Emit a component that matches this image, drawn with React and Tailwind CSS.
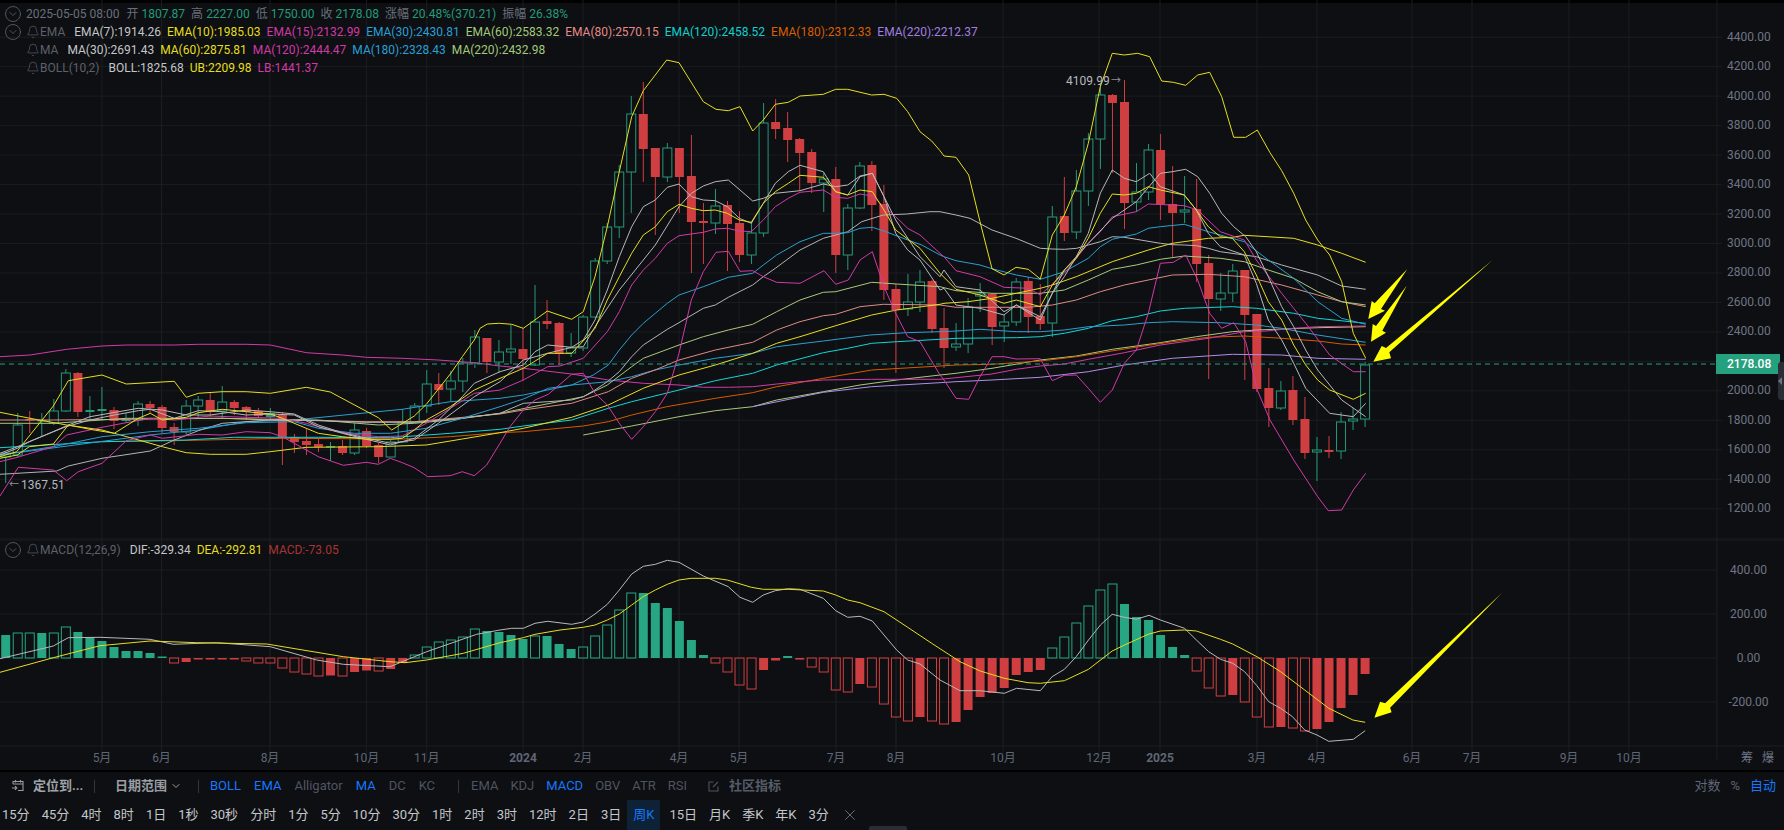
import { Bell, CircleChevronDown, ChevronDown, X } from 'lucide-react'

// reference crops were read in three frames, these map them back to page pixels
const f8 = (u, v) => [u / 3, 340 + v / 3]
const f9 = (u, v) => [480 + u / 3, 60 + v / 3]
const f10 = (u, v) => [920 + u / 3, 30 + v / 3]
const m7 = (u, v) => [u / 3, 530 + v / 3]
const m11 = (u, v) => [480 + u / 3, 540 + v / 3]
const m12 = (u, v) => [940 + u / 2.613, 540 + v / 3]

const build = (...parts) => {
  const out = []
  parts.forEach(([fn, arr]) => {
    for (let i = 0; i < arr.length; i += 2) {
      const p = fn(arr[i], arr[i + 1])
      if (!out.length || p[0] > out[out.length - 1][0]) out.push(p)
    }
  })
  return out.map(p => p[0].toFixed(1) + ',' + p[1].toFixed(1)).join(' ')
}

const LINES = [
  // MA220
  ['#a9c97a', build([f9, [310,1125,455,1098,597,1070,706,1052,818,1040,890,1020,1030,995,1140,975,1250,960,1380,945]], [f10, [108,1030,216,1015,361,990,469,978,577,958,721,938,829,920,937,905,1009,900,1193,893,1337,890]])],
  // EMA220
  ['#b08ee8', build([f9, [818,1040,1030,997,1175,980,1380,968]], [f10, [108,1055,216,1050,361,1042,505,1025,613,1005,757,985,937,973,1085,975,1193,985,1337,988]])],
  // EMA180
  ['#d65a00', build([f8, [306,305,523,302,847,295,1207,297,1351,290,1500,278]], [f9, [130,1115,310,1098,385,1085,455,1065,560,1040,706,1015,818,998,890,980,1030,955,1175,930,1380,918]], [f10, [108,1005,216,1003,361,993,469,980,613,957,757,935,865,922,973,918,1085,925,1193,933,1265,942,1337,945]])],
  // MA120
  ['#d13aa8', build([f8, [0,50,90,45,200,28,306,18,379,15,523,15,595,13,739,13,811,15,919,38,1027,45,1099,52,1207,55,1315,60,1423,68,1500,78]], [f9, [130,925,275,942,385,960,490,970,597,975,670,982,745,982,818,980,890,972,960,965,1030,960,1175,958,1380,958]], [f10, [108,1043,216,1032,289,1018,361,1008,433,1002,505,988,613,968,721,945,865,925,973,905,1037,903,1121,895,1193,890,1337,888]])],
  // EMA120
  ['#12d6d6', build([f8, [0,323,306,305,559,300,703,292,955,292,1171,293,1351,280,1500,268]], [f9, [130,1098,275,1080,385,1045,455,1025,597,990,706,962,818,940,890,915,1030,878,1103,865,1175,850,1250,845,1380,838]], [f10, [108,925,289,923,361,920,433,910,505,895,577,872,649,860,721,843,793,835,937,830,1009,835,1121,850,1193,865,1337,880]])],
  // MA180
  ['#2b9fd0', build([f8, [0,345,450,285,595,270,739,245,883,240,1063,222,1207,208,1351,185,1500,175]], [f9, [130,1005,275,975,385,965,455,950,525,930,597,915,706,895,818,880,890,860,1030,843,1170,825,1280,818,1380,815]], [f10, [108,903,180,898,289,905,361,905,433,900,505,890,613,885,685,878,757,875,901,878,1009,885,1085,895,1193,915,1337,937]])],
  // EMA80
  ['#e08a85', build([f8, [0,240,160,240,379,238,667,235,811,238,1099,245,1243,245,1500,222]], [f9, [130,1050,275,1030,385,995,455,955,525,930,597,900,706,870,818,847,890,810,960,785,1030,767,1067,763,1140,740,1210,733,1380,735]], [f10, [108,832,216,832,325,832,397,825,469,810,541,785,613,765,685,750,757,735,865,733,973,740,1085,765,1193,795,1265,815,1337,830]])],
  // EMA60
  ['#a9c97a', build([f8, [0,250,160,250,379,235,667,235,811,240,955,240,1135,255,1243,250,1351,240,1500,220]], [f9, [310,1010,382,975,455,920,490,895,597,855,670,830,745,810,818,793,890,755,960,720,1030,697,1067,695,1175,667,1250,672,1380,680]], [f10, [108,782,216,790,289,790,361,790,433,780,505,750,577,718,649,705,721,688,793,678,901,685,973,695,1045,720,1121,745,1193,785,1265,815,1337,825]])],
  // MA60
  ['#e8dd20', build([f8, [0,217,90,235,200,255,306,270,380,290,487,320,559,338,631,343,739,343,811,335,919,322,1135,320,1279,315,1387,297,1500,278]], [f9, [130,1105,275,1072,385,1035,490,985,597,945,706,915,818,880,890,850,960,830,1067,797,1175,765,1250,750,1380,733]], [f10, [72,820,144,815,216,805,289,790,361,775,397,765,469,740,577,695,685,660,757,640,865,625,937,622,973,616,1121,625,1193,645,1265,670,1337,697]])],
  // MA30
  ['#b4b4b4', build([f8, [0,403,170,393,205,378,306,355,451,333,523,300,595,272,667,250,811,240,955,242,1099,247,1243,247,1387,235,1500,220]], [f9, [130,1030,203,1025,275,1020,310,1010,345,990,382,965,418,935,455,890,490,855,562,808,597,788,670,745,706,735,745,712,818,675,850,650,886,625,960,570,1030,535,1067,525,1103,515,1145,485,1210,465,1280,462,1350,455,1380,455]], [f10, [108,555,150,565,216,600,288,625,361,655,397,657,433,658,470,655,505,645,541,635,577,620,613,622,649,628,721,640,757,644,793,645,829,647,865,655,901,665,973,675,1009,680,1085,705,1193,735,1265,768,1337,778]])],
  // EMA30
  ['#2b9fd0', build([f8, [0,345,160,320,306,290,451,275,595,265,739,248,883,245,955,265,1063,280,1171,280,1279,265,1387,235,1500,200]], [f9, [130,1017,205,985,275,975,340,945,385,915,418,870,455,825,490,790,526,760,562,730,597,705,670,680,745,652,818,640,850,615,890,585,960,545,1030,520,1067,520,1103,518,1140,505,1177,502,1212,513,1283,540,1325,555,1380,585]], [f10, [72,680,108,692,180,705,216,716,289,735,361,748,433,725,505,685,541,650,577,628,649,612,685,595,721,590,793,583,865,605,973,635,1045,690,1121,745,1193,815,1265,865,1337,883]])],
  // LB
  ['#d13aa8', build([f8, [0,468,55,382,160,390,200,422,235,395,306,370,379,302,451,285,487,295,595,283,667,285,739,275,811,278,847,290,919,330,955,350,1030,376,1099,367,1135,373,1171,355,1207,368,1243,383,1283,410,1351,407,1387,395,1423,407,1460,375,1500,310]], [f9, [90,1100,130,1050,165,1020,205,1003,275,943,310,940,345,1000,382,1035,418,1090,455,1138,490,1100,526,1055,562,1000,597,880,634,720,670,635,708,577,745,574,780,634,818,632,850,650,890,667,960,670,1032,632,1067,673,1105,660,1140,600,1177,575,1212,680,1247,760,1283,830,1320,845,1380,945]], [f10, [72,1050,108,1105,146,1108,180,1040,216,980,252,980,288,987,361,986,397,1052,433,1036,469,1035,505,1075,541,1117,577,1080,613,1000,649,960,685,850,721,700,760,697,797,675,833,750,869,850,905,895,941,878,977,935,1012,1080,1050,1170,1121,1290,1193,1400,1225,1442,1265,1440,1300,1380,1337,1330]])],
  // UB
  ['#e8dd20', build([f8, [0,350,50,335,160,198,205,122,306,105,379,132,523,124,559,172,595,160,667,155,739,155,811,160,919,142,991,156,1135,233,1175,270,1243,228,1279,193,1351,102,1387,50,1423,0]], [f9, [0,805,22,792,58,790,95,793,130,805,202,753,275,778,310,755,345,650,382,500,418,335,455,170,490,92,560,0,597,8,670,125,708,148,745,152,780,140,818,213,850,180,886,133,925,127,960,108,1030,103,1067,88,1103,88,1175,105,1212,103,1250,115,1283,155,1320,215,1355,243,1380,272]], [f10, [72,378,108,382,146,435,180,575,216,716,252,735,288,712,325,718,361,747,397,615,433,555,469,470,505,340,541,170,577,70,613,75,653,70,689,80,725,153,760,157,797,166,833,135,869,127,905,200,941,322,977,322,1012,300,1050,368,1085,422,1121,490,1157,570,1193,630,1229,675,1265,755,1300,910,1337,985]])],
  // EMA15
  ['#d13aa8', build([f8, [0,365,52,352,160,320,200,285,306,262,379,248,451,235,523,240,631,228,739,232,847,235,919,250,991,270,1063,283,1135,290,1207,288,1279,250,1351,205,1423,160,1500,150]], [f9, [130,960,203,920,240,918,310,895,382,815,418,755,455,675,490,630,526,595,562,550,597,527,670,517,706,507,742,505,778,513,814,515,850,480,886,440,925,415,960,397,1030,390,1067,412,1103,415,1140,402,1177,408,1212,440,1247,470,1283,505,1320,525,1380,580]], [f10, [72,680,108,722,180,740,252,772,325,775,361,795,433,730,505,640,541,605,577,560,649,545,685,522,757,525,793,527,833,540,901,605,973,630,1009,690,1085,790,1157,880,1229,975,1300,1025,1337,1025]])],
  // BOLL
  ['#b8b8b8', build([f8, [0,340,52,320,160,275,205,255,270,230,415,205,487,210,559,225,631,225,739,210,811,215,883,222,955,255,1027,278,1171,310,1243,300,1315,250,1423,170,1500,125]], [f9, [130,900,203,880,275,862,310,860,345,800,418,690,490,600,526,555,597,440,634,400,670,378,706,365,745,360,780,390,818,423,850,415,886,400,960,392,1030,372,1067,380,1103,375,1140,348,1177,340,1212,410,1247,480,1320,590,1380,650]], [f10, [72,720,108,770,180,780,252,845,289,825,361,860,433,720,505,640,577,565,649,515,721,430,757,425,797,418,833,440,869,490,905,550,941,590,977,620,1009,665,1045,740,1085,830,1121,890,1157,960,1193,1020,1265,1110,1337,1160]])],
  // EMA7
  ['#b8b8b8', build([f8, [0,345,52,325,88,305,160,275,198,260,270,240,343,225,415,212,451,208,523,235,595,212,667,215,739,225,811,222,883,225,955,260,1027,280,1099,298,1171,315,1243,295,1315,240,1387,170,1423,130,1500,95]], [f9, [130,915,165,875,203,855,275,862,310,840,345,780,382,690,418,590,455,500,490,440,526,420,562,382,597,372,634,410,670,420,706,422,742,440,778,475,814,490,850,430,886,370,925,335,960,316,1030,335,1067,395,1103,405,1140,350,1177,340,1212,410,1247,520,1283,570,1320,600,1380,690]], [f10, [72,775,108,825,180,835,216,845,252,855,289,825,361,870,397,790,433,740,469,680,505,610,541,490,577,420,613,445,649,455,689,430,721,470,793,495,829,540,865,610,901,650,973,675,1009,760,1045,870,1085,930,1121,1000,1157,1075,1229,1150,1300,1160,1337,1120]])],
  // EMA10
  ['#e8dd20', build([f8, [0,355,52,345,88,320,160,312,205,255,270,268,343,280,415,235,451,220,487,240,559,232,595,218,667,208,739,215,811,222,847,235,919,265,955,280,1027,290,1099,298,1171,298,1207,295,1243,270,1279,240,1351,200,1423,150,1500,115]], [f9, [130,925,203,880,275,880,345,805,382,720,418,650,455,580,490,525,526,500,562,455,597,433,634,445,670,452,706,450,742,460,778,480,814,487,850,430,886,395,925,370,960,346,1030,352,1067,395,1103,405,1140,390,1177,395,1212,450,1247,510,1320,565,1380,640]], [f10, [108,778,180,795,252,820,289,810,361,830,397,765,433,720,469,685,505,625,541,550,577,492,613,495,649,490,685,470,721,480,793,495,829,540,865,590,901,620,937,625,973,665,1009,735,1045,815,1085,870,1121,945,1157,1005,1193,1050,1229,1080,1300,1108,1337,1090]])],
]

// [bodyTop, bodyBottom, wickTop, wickBottom, kind] r = red, g = green filled thin, h = hollow green
const CANDLES = [
  [453,457,452,483,'h'],[425,455,413,457,'h'],[419,420,411,433,'r'],[420,421,413,437,'g'],[411,423,399,425,'h'],[373,411,369,412,'h'],[373,412,372,417,'r'],[410,412,396,420,'g'],[409,411,387,420,'g'],[410,421,407,429,'r'],
  [419,421,413,423,'g'],[404,420,401,426,'h'],[404,408,401,414,'r'],[407,428,405,433,'r'],[427,432,423,445,'r'],[406,432,400,436,'h'],[400,406,396,417,'h'],[400,412,393,417,'r'],[402,411,386,418,'h'],[402,408,400,415,'r'],
  [407,412,406,420,'r'],[411,416,408,418,'r'],[413,417,408,420,'g'],[415,437,412,465,'r'],[437,442,434,453,'r'],[441,445,428,455,'r'],[444,447,438,452,'r'],[446,447,442,461,'g'],[446,453,440,455,'r'],[430,453,423,455,'h'],
  [431,446,428,448,'r'],[445,457,443,463,'r'],[442,457,440,457,'h'],[422,442,409,443,'h'],[406,422,403,423,'h'],[384,406,370,413,'h'],[384,390,373,405,'r'],[381,389,371,401,'h'],[363,381,358,392,'h'],[337,363,330,368,'h'],
  [338,362,338,373,'r'],[352,362,340,373,'h'],[349,352,325,364,'h'],[349,359,328,381,'r'],[322,365,285,366,'h'],[321,324,300,329,'r'],[323,354,322,365,'r'],[348,353,333,357,'h'],[317,348,315,351,'h'],[261,317,258,318,'h'],
  [227,261,223,264,'h'],[172,227,165,238,'h'],[114,172,96,213,'h'],[114,149,82,182,'r'],[148,177,148,235,'r'],[148,177,143,182,'h'],[148,177,148,213,'r'],[176,222,135,273,'r'],[221,223,203,264,'r'],[206,223,189,234,'h'],
  [205,224,201,271,'r'],[223,255,211,262,'r'],[233,255,222,264,'h'],[123,233,103,237,'h'],[122,129,99,139,'r'],[128,140,112,162,'r'],[139,153,138,190,'r'],[152,183,149,193,'r'],[179,183,173,212,'h'],[179,255,167,273,'r'],
  [208,255,204,270,'h'],[166,208,162,209,'h'],[165,205,161,231,'r'],[204,290,185,300,'r'],[289,310,284,373,'r'],[302,309,274,316,'h'],[282,302,270,312,'h'],[281,329,280,333,'r'],[328,348,308,368,'r'],[344,347,323,351,'h'],
  [307,344,298,353,'h'],[294,296,283,312,'h'],[294,327,293,345,'r'],[322,326,315,342,'h'],[282,322,278,326,'h'],[281,317,277,333,'r'],[316,324,284,330,'r'],[217,323,206,337,'h'],[216,233,177,241,'r'],[191,232,170,239,'h'],
  [139,191,133,206,'h'],[95,139,83,169,'h'],[95,103,94,173,'r'],[102,203,80,229,'r'],[192,202,163,212,'h'],[150,192,144,200,'h'],[150,204,134,220,'r'],[204,213,166,257,'r'],[210,212,176,223,'h'],[209,264,179,282,'r'],
  [263,299,255,379,'r'],[293,299,273,311,'h'],[271,293,264,302,'h'],[270,315,270,380,'r'],[314,389,314,392,'r'],[388,408,368,427,'r'],[391,408,381,410,'h'],[390,420,376,425,'r'],[419,453,397,459,'r'],[450,452,437,481,'h'],
  [450,452,436,458,'r'],[422,451,412,459,'h'],[419,421,408,430,'h'],[365,419,362,427,'h'],
]

// [height above zero, hollow]
const BARS = [
  [23,0],[25,1],[25,1],[25,0],[25,1],[31,1],[26,0],[21,0],[17,0],[11,0],[7,0],[7,0],[5,0],[1.5,0],[-5,1],[-4,0],[-1.5,0],[-1.5,0],[-1.5,0],[-1.5,0],
  [-3,1],[-5,1],[-5,1],[-10,1],[-14,1],[-16,1],[-18,1],[-17.5,0],[-18,1],[-14,0],[-12.5,0],[-13,1],[-11,0],[-5,0],[3,1],[11,1],[16,1],[18,1],[21,1],[29,1],
  [27,0],[26,0],[23,0],[19,0],[22,1],[22,0],[14,0],[9,0],[11,1],[22,1],[33,1],[48,1],[65,1],[65,0],[55,0],[50,0],[37,0],[18,0],[3,0],[-5,1],
  [-14,1],[-27,1],[-31,1],[-12,0],[-2.5,0],[2,0],[-1.6,0],[-9,1],[-14,1],[-32,1],[-34,1],[-26,0],[-29,1],[-46,1],[-59,1],[-63,1],[-59,0],[-63,1],[-66,1],[-64,0],
  [-52,0],[-39,0],[-35,0],[-30,0],[-17,0],[-14,0],[-12,0],[10,1],[21,1],[35,1],[52,1],[68,1],[74,1],[54,0],[41,0],[38,0],[23,0],[11,0],[3,0],[-13,1],
  [-30,1],[-38,1],[-37,0],[-44,1],[-59,1],[-69,1],[-69,0],[-70,1],[-73,1],[-71,0],[-64,0],[-50,0],[-37,0],[-16,0],
]

const DIF = build([m7, [0,386,160,348,205,323,300,322,450,328,520,343,650,338,811,350,950,390,1030,403,1170,410,1280,365,1430,313,1500,300]], [m11, [95,265,130,265,165,250,203,244,275,253,310,246,345,222,382,193,418,150,455,102,490,79,526,73,562,61,597,67,670,108,745,140,780,172,818,187,850,165,886,152,925,146,960,148,1030,175,1067,212,1103,232,1140,229,1177,243,1212,285,1250,330,1283,360,1320,372,1380,420,1440,452]], [m12, [42,452,105,452,168,460,200,445,262,452,293,410,325,388,356,350,388,300,419,255,450,223,482,232,513,238,546,226,576,240,639,265,670,300,702,335,733,358,765,370,796,395,828,437,859,485,890,505,921,530,953,570,985,585,1016,604,1080,598,1111,572]])
const DEA = build([m7, [0,427,55,412,160,383,300,347,450,333,590,338,800,342,1030,380,1170,395,1215,398,1280,390,1390,370,1500,338]], [m11, [60,305,130,293,165,283,240,270,310,262,345,255,382,240,418,222,455,195,490,170,526,150,562,133,597,120,634,115,706,115,742,120,814,142,850,148,925,148,1030,153,1067,165,1103,180,1140,188,1212,215,1283,262,1355,310,1440,365]], [m12, [42,360,105,393,168,415,230,428,262,430,325,422,388,388,450,333,482,315,544,283,576,273,639,270,670,273,733,298,765,312,828,350,890,395,953,450,1016,505,1079,540,1111,547]])

const ARROWS = [
  [[322,87],[243,207],[255,212],[205,237],[215,183],[224,190]],
  [[320,137],[247,272],[258,278],[213,305],[218,252],[228,258]],
  [[578,60],[268,337],[273,355],[220,365],[245,318],[258,324]],
].map(a => a.map(p => (1300 + p[0] / 3).toFixed(1) + ',' + (240 + p[1] / 3).toFixed(1)).join(' '))
const MACD_ARROW = [[1470,157],[1176,503],[1180,517],[1135,533],[1150,485],[1163,490]].map(p => m12(p[0], p[1]).map(n => n.toFixed(1)).join(',')).join(' ')

const MONTHS = [
  ['5月',102],['6月',161.5],['8月',270],['10月',366.6],['11月',426.7],['2024',523,1],['2月',583],['4月',679],['5月',739],['7月',836],['8月',896],
  ['10月',1003],['12月',1099],['2025',1160,1],['3月',1257],['4月',1317],['6月',1412],['7月',1472],['9月',1569],['10月',1629],
]
const PRICES = ['4400.00','4200.00','4000.00','3800.00','3600.00','3400.00','3200.00','3000.00','2800.00','2600.00','2400.00','','2000.00','1800.00','1600.00','1400.00','1200.00']
const GRID_Y = PRICES.map((_, i) => 37.2 + i * 29.47)
const candleX = i => 5.7 + i * 12.03

const EMA_ROW = [
  ['EMA(7):1914.26','text-[#c4c6c9]'],['EMA(10):1985.03','text-[#e6dd1e]'],['EMA(15):2132.99','text-[#cf3aa6]'],['EMA(30):2430.81','text-[#2a9fd6]'],
  ['EMA(60):2583.32','text-[#a3c97b]'],['EMA(80):2570.15','text-[#e58a8a]'],['EMA(120):2458.52','text-[#10d0d0]'],['EMA(180):2312.33','text-[#d95f02]'],['EMA(220):2212.37','text-[#a37fe0]'],
]
const MA_ROW = [
  ['MA(30):2691.43','text-[#c4c6c9]'],['MA(60):2875.81','text-[#e6dd1e]'],['MA(120):2444.47','text-[#cf3aa6]'],['MA(180):2328.43','text-[#2a9fd6]'],['MA(220):2432.98','text-[#a3c97b]'],
]
const BOLL_ROW = [['BOLL:1825.68','text-[#c4c6c9]'],['UB:2209.98','text-[#e6dd1e]'],['LB:1441.37','text-[#cf3aa6]']]
const MACD_ROW = [['DIF:-329.34','text-[#c4c6c9]'],['DEA:-292.81','text-[#e6dd1e]'],['MACD:-73.05','text-[#a93436]']]
const OHLC = [['开','1807.87'],['高','2227.00'],['低','1750.00'],['收','2178.08'],['涨幅','20.48%(370.21)'],['振幅','26.38%']]

const PERIODS = ['15分','45分','4时','8时','1日','1秒','30秒','分时','1分','5分','10分','30分','1时','2时','3时','12时','2日','3日','周K','15日','月K','季K','年K','3分']
const MAIN_IND = [['BOLL',1],['EMA',1],['Alligator',0],['MA',1],['DC',0],['KC',0]]
const SUB_IND = [['EMA',0],['KDJ',0],['MACD',1],['OBV',0],['ATR',0],['RSI',0]]

function Grid({ rows }) {
  return (
    <>
      {rows.map(y => (
        <line key={y} x1="0" x2="1722" y1={y} y2={y} stroke="#1b1d21" strokeWidth="1" />
      ))}
      {MONTHS.map(([, x]) => (
        <line key={x} x1={x} x2={x} y1="0" y2="760" stroke="#1b1d21" strokeWidth="1" />
      ))}
      <line x1="1717" x2="1717" y1="0" y2="760" stroke="#1b1d21" strokeWidth="1" />
    </>
  )
}

function Candle({ c, i }) {
  const [top, bottom, wickTop, wickBottom, kind] = c
  const x = candleX(i)
  const red = kind === 'r'
  const color = red ? '#cf3f41' : '#26997a'
  return (
    <g>
      <line x1={x} x2={x} y1={wickTop} y2={wickBottom} stroke={color} strokeWidth="1" />
      <rect
        x={x - 4.5}
        y={top}
        width="9"
        height={Math.max(bottom - top, 1.5)}
        fill={kind === 'h' ? '#0d0f12' : color}
        stroke={kind === 'h' ? color : 'none'}
        strokeWidth="1"
      />
    </g>
  )
}

function Legend({ title, items }) {
  return (
    <div className="flex items-center h-[18px]">
      <Bell size={14} strokeWidth={1.2} className="text-[#5c616c]" />
      <span className="text-[#5c616c] mr-[9px]">{title}</span>
      <div className="flex gap-[6px]">
        {items.map(([t, c]) => (
          <span key={t} className={c}>{t}</span>
        ))}
      </div>
    </div>
  )
}

export default function App() {
  return (
    <div className="w-[1784px] h-[830px] overflow-hidden bg-[#0d0f12] text-[12px] font-['Roboto','Noto_Sans_CJK_SC',sans-serif] relative">
      <div className="h-[3px] bg-black" />

      {/* K线主图 */}
      <div className="flex h-[535px] relative">
        <div className="relative w-[1717px] h-full">
          <svg width="1717" height="535" viewBox="0 3 1717 535" className="block overflow-visible">
            <Grid rows={GRID_Y} />
            {CANDLES.map((c, i) => (
              <Candle key={i} c={c} i={i} />
            ))}
            {LINES.map(([color, pts], i) => (
              <polyline key={i} points={pts} fill="none" stroke={color} strokeWidth="1" strokeLinejoin="round" />
            ))}
            <line x1="0" x2="1717" y1="364" y2="364" stroke="#26a17f" strokeWidth="1" strokeDasharray="5 4" />
            <line x1="1716" x2="1722" y1="364" y2="364" stroke="#ffffff" strokeWidth="1" />
            {ARROWS.map(pts => (
              <polygon key={pts} points={pts} fill="#ffff00" />
            ))}
          </svg>

          <div className="absolute left-[4px] top-[2px] leading-none">
            <div className="flex items-center h-[18px]">
              <CircleChevronDown size={18} strokeWidth={1.1} className="text-[#5c616c] mr-[4px]" />
              <span className="text-[#6a6f7b] mr-[7px]">2025-05-05 08:00</span>
              <div className="flex gap-[6px]">
                {OHLC.map(([k, v]) => (
                  <span key={k} className="flex gap-[3px]">
                    <span className="text-[#6a6f7b]">{k}</span>
                    <span className="text-[#239c79]">{v}</span>
                  </span>
                ))}
              </div>
            </div>
            <div className="flex items-center">
              <CircleChevronDown size={18} strokeWidth={1.1} className="text-[#5c616c] mr-[4px]" />
              <Legend title="EMA" items={EMA_ROW} />
            </div>
            <div className="pl-[22px]">
              <Legend title="MA" items={MA_ROW} />
              <Legend title="BOLL(10,2)" items={BOLL_ROW} />
            </div>
          </div>

          <span className="absolute left-[1066px] top-[69px] text-[#b5b8be]">4109.99</span>
          <span className="absolute left-[1111px] top-[70px] text-[10px] text-[#8b8f97]">→</span>
          <span className="absolute left-[9px] top-[474px] text-[10px] text-[#8b8f97]">←</span>
          <span className="absolute left-[21px] top-[473px] text-[#b5b8be]">1367.51</span>
        </div>

        <div className="flex-1 flex flex-col pt-[19px] text-[#6f7585]">
          {PRICES.map((p, i) => (
            <div key={i} className="h-[29.47px] flex items-center pl-[10px]">{p}</div>
          ))}
        </div>

        <div className="absolute left-[1716px] top-[351px] w-[64px] h-[20px] bg-[#26a17f] text-white font-medium flex items-center pl-[11px]">
          2178.08
        </div>
        <div className="absolute right-0 top-[359px] w-[6px] h-[38px] bg-[#2a2d33] rounded-l-[3px] flex items-center">
          <div className="w-0 h-0 border-y-[4px] border-y-transparent border-r-[4px] border-r-[#6f7585]" />
        </div>
      </div>

      <div className="h-[3px] bg-[#141619]" />

      {/* MACD副图 */}
      <div className="flex h-[204px]">
        <div className="relative w-[1717px] h-full overflow-hidden">
          <svg width="1717" height="204" viewBox="0 541 1717 204" className="block">
            <Grid rows={[570, 614, 658, 702]} />
            {BARS.map(([h, hollow], i) => {
              const color = h > 0 ? '#26a682' : '#cf3f41'
              const y = h > 0 ? 658 - h : 658
              return (
                <rect
                  key={i}
                  x={candleX(i) - 4.5}
                  y={y}
                  width="9"
                  height={Math.abs(h)}
                  fill={hollow ? 'none' : color}
                  stroke={hollow ? color : 'none'}
                  strokeWidth="1"
                />
              )
            })}
            <polyline points={DIF} fill="none" stroke="#b8b8b8" strokeWidth="1" />
            <polyline points={DEA} fill="none" stroke="#e8dd20" strokeWidth="1" />
            <polygon points={MACD_ARROW} fill="#ffff00" />
          </svg>

          <div className="absolute left-[4px] top-0 leading-none flex items-center h-[18px]">
            <CircleChevronDown size={18} strokeWidth={1.1} className="text-[#5c616c] mr-[4px]" />
            <Legend title="MACD(12,26,9)" items={MACD_ROW} />
          </div>
        </div>
        <div className="flex-1 flex flex-col pt-[7px] text-[#6f7585]">
          {['400.00', '200.00', '0.00', '-200.00'].map(p => (
            <div key={p} className="h-[44px] flex items-center justify-center pr-[4px]">{p}</div>
          ))}
        </div>
      </div>

      <div className="h-[2px] bg-[#141619]" />

      {/* 时间轴 */}
      <div className="relative h-[23px] text-[#5f6675]">
        {MONTHS.map(([label, x, strong]) => (
          <span
            key={label + x}
            className={strong ? 'absolute top-[2px] -translate-x-1/2 font-bold' : 'absolute top-[2px] -translate-x-1/2'}
            style={{ left: x }}
          >
            {label}
          </span>
        ))}
        <div className="absolute left-[1741px] top-[2px] flex gap-[9px] text-[#6f7585]">
          <span>筹</span>
          <span>爆</span>
        </div>
      </div>

      <div className="h-[2px] bg-black" />

      {/* 工具栏 */}
      <div className="flex items-center h-[28px] pl-[11px] text-[13px] text-[#4f5461]">
        <svg width="14" height="14" viewBox="0 0 14 14" fill="none" stroke="#9a9da3" strokeWidth="1.1" className="mr-[8px]">
          <path d="M2 5V2.5h10v9H7M2 5h10M4.5 1v2.5M9.5 1v2.5M1 9h4.5M4 7.2 5.8 9 4 10.8" />
        </svg>
        <span className="font-bold text-[#a0a3a8] w-[48px] whitespace-nowrap">定位到...</span>
        <div className="w-px h-[13px] bg-[#33363d] ml-[13px] mr-[20px]" />
        <span className="font-bold text-[#9a9da3]">日期范围</span>
        <ChevronDown size={12} className="text-[#9a9da3] ml-[3px]" />
        <div className="w-px h-[13px] bg-[#33363d] ml-[16px] mr-[11px]" />
        <div className="flex gap-[13px]">
          {MAIN_IND.map(([t, on]) => (
            <span key={t} className={on ? 'text-[#1677ff]' : ''}>{t}</span>
          ))}
        </div>
        <div className="w-px h-[13px] bg-[#33363d] ml-[23px] mr-[12px]" />
        <div className="flex gap-[12px]">
          {SUB_IND.map(([t, on]) => (
            <span key={t} className={on ? 'text-[#1677ff]' : ''}>{t}</span>
          ))}
        </div>
        <svg width="11" height="11" viewBox="0 0 11 11" fill="none" stroke="#4f5461" strokeWidth="1.1" className="ml-[21px] mr-[10px]">
          <path d="M5.5 1H1v9h9V5.5M5 6l5-5" />
        </svg>
        <span className="font-bold text-[#565b68]">社区指标</span>
        <div className="ml-auto flex gap-[10px] pr-[8px]">
          <span className="text-[#5f6675]">对数</span>
          <span className="text-[#5f6675]">%</span>
          <span className="text-[#1677ff]">自动</span>
        </div>
      </div>

      <div className="flex items-center h-[30px] pl-[2px] gap-[12px] text-[13px] text-[#c4c6ca]">
        {PERIODS.map(p => (
          <span
            key={p}
            className={p === '周K' ? 'h-[30px] flex items-center -ml-[6px] -mr-[3px] px-[6px] bg-[#0d2236] text-[#1677ff]' : ''}
          >
            {p}
          </span>
        ))}
        <X size={18} strokeWidth={1.2} className="text-[#6f7585]" />
      </div>

      <div className="absolute left-[869px] bottom-0 w-[38px] h-[4px] bg-[#2a2d33] rounded-t-[2px]" />
    </div>
  )
}
